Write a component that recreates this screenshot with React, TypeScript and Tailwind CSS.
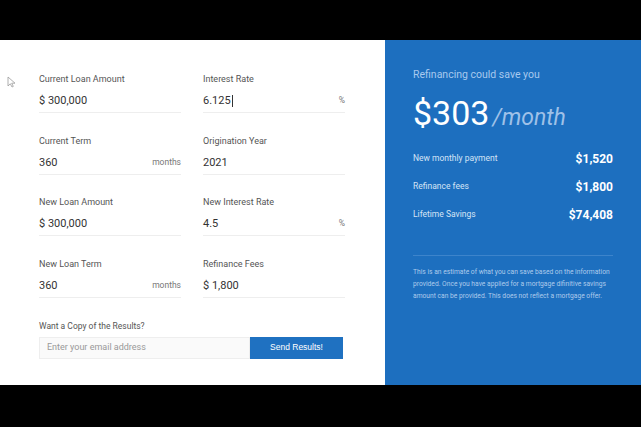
import React from "react";

const fields = [
  { label: "Current Loan Amount", value: "$ 300,000", suffix: "" },
  { label: "Interest Rate", value: "6.125", suffix: "%", caret: true },
  { label: "Current Term", value: "360", suffix: "months" },
  { label: "Origination Year", value: "2021", suffix: "" },
  { label: "New Loan Amount", value: "$ 300,000", suffix: "" },
  { label: "New Interest Rate", value: "4.5", suffix: "%" },
  { label: "New Loan Term", value: "360", suffix: "months" },
  { label: "Refinance Fees", value: "$ 1,800", suffix: "" },
];

const summary = [
  { label: "New monthly payment", value: "$1,520" },
  { label: "Refinance fees", value: "$1,800" },
  { label: "Lifetime Savings", value: "$74,408" },
];

const font = { fontFamily: 'Roboto, "Open Sans", sans-serif' };

const App = () => {
  return (
    <div className="w-[641px] h-[427px] bg-black pt-[40px] overflow-hidden" style={font}>
      <div className="flex h-[345px]">
        <div className="relative w-[385px] shrink-0 bg-white pl-[39px] pt-[33px]">
          <svg
            className="absolute left-[7px] top-[36px]"
            width="9"
            height="12"
            viewBox="0 0 9 12"
          >
            <path
              d="M1 1 L1 10 L3.3 7.8 L5 11 L6.3 10.4 L4.7 7.2 L8 7.2 Z"
              fill="white"
              stroke="#9a9a9a"
              strokeWidth="0.8"
              strokeLinejoin="round"
            />
          </svg>
          <div className="grid grid-cols-[142px_142px] gap-x-[22px] gap-y-[21.5px]">
            {fields.map((f, i) => (
              <div key={i}>
                <div className="text-[9px] leading-[12px] text-[#555]">{f.label}</div>
                <div className="mt-[4px] flex items-end justify-between border-b border-[#eeeeee] pb-[3px] h-[24px]">
                  <span className="text-[11px] leading-[17px] text-[#333] flex items-center">
                    {f.value}
                    {f.caret && <span className="ml-[1px] inline-block w-px h-[12px] bg-[#333]" />}
                  </span>
                  {f.suffix && (
                    <span className="text-[8.5px] leading-[17px] text-[#777]">{f.suffix}</span>
                  )}
                </div>
              </div>
            ))}
          </div>
          <div className="mt-[22px] text-[8.5px] leading-[12px] text-[#555]">Want a Copy of the Results?</div>
          <div className="mt-[5px] flex w-[304px] h-[22px]">
            <div className="flex-1 flex items-center bg-[#fafafa] border border-[#eeeeee] pl-[7px] text-[9px] text-[#999]">
              Enter your email address
            </div>
            <button
              className="w-[93px] bg-[#1f71c1] text-white text-[8.5px]"
              style={{ fontFamily: '"Liberation Sans", Arial, sans-serif' }}
            >
              Send Results!
            </button>
          </div>
        </div>
        <div className="w-[256px] min-w-0 overflow-hidden bg-[#1d6fbf] px-[28px] pt-[28px]">
          <div className="text-[10.5px] leading-[14px] text-[#a8c9ee]">Refinancing could save you</div>
          <div className="mt-[9px] flex items-baseline">
            <span className="text-[34px] leading-[44px] text-white">$303</span>
            <span className="ml-[3px] text-[23px] italic text-[#9fc1e8]">/month</span>
          </div>
          <div className="mt-[15px] flex flex-col gap-[12px]">
            {summary.map((s, i) => (
              <div key={i} className="flex items-center justify-between h-[16px]">
                <span className="text-[8.5px] text-[#d4e4f6]">{s.label}</span>
                <span className="text-[12px] font-bold text-white">{s.value}</span>
              </div>
            ))}
          </div>
          <div className="mt-[32px] border-t border-[#3d84cb]" />
          <p className="mt-[10px] text-[6.7px] leading-[12px] text-[#aecbec] whitespace-nowrap">
            This is an estimate of what you can save based on the information
            <br />
            provided. Once you have applied for a mortgage difinitive savings
            <br />
            amount can be provided. This does not reflect a mortgage offer.
          </p>
        </div>
      </div>
    </div>
  );
};

export default App;
